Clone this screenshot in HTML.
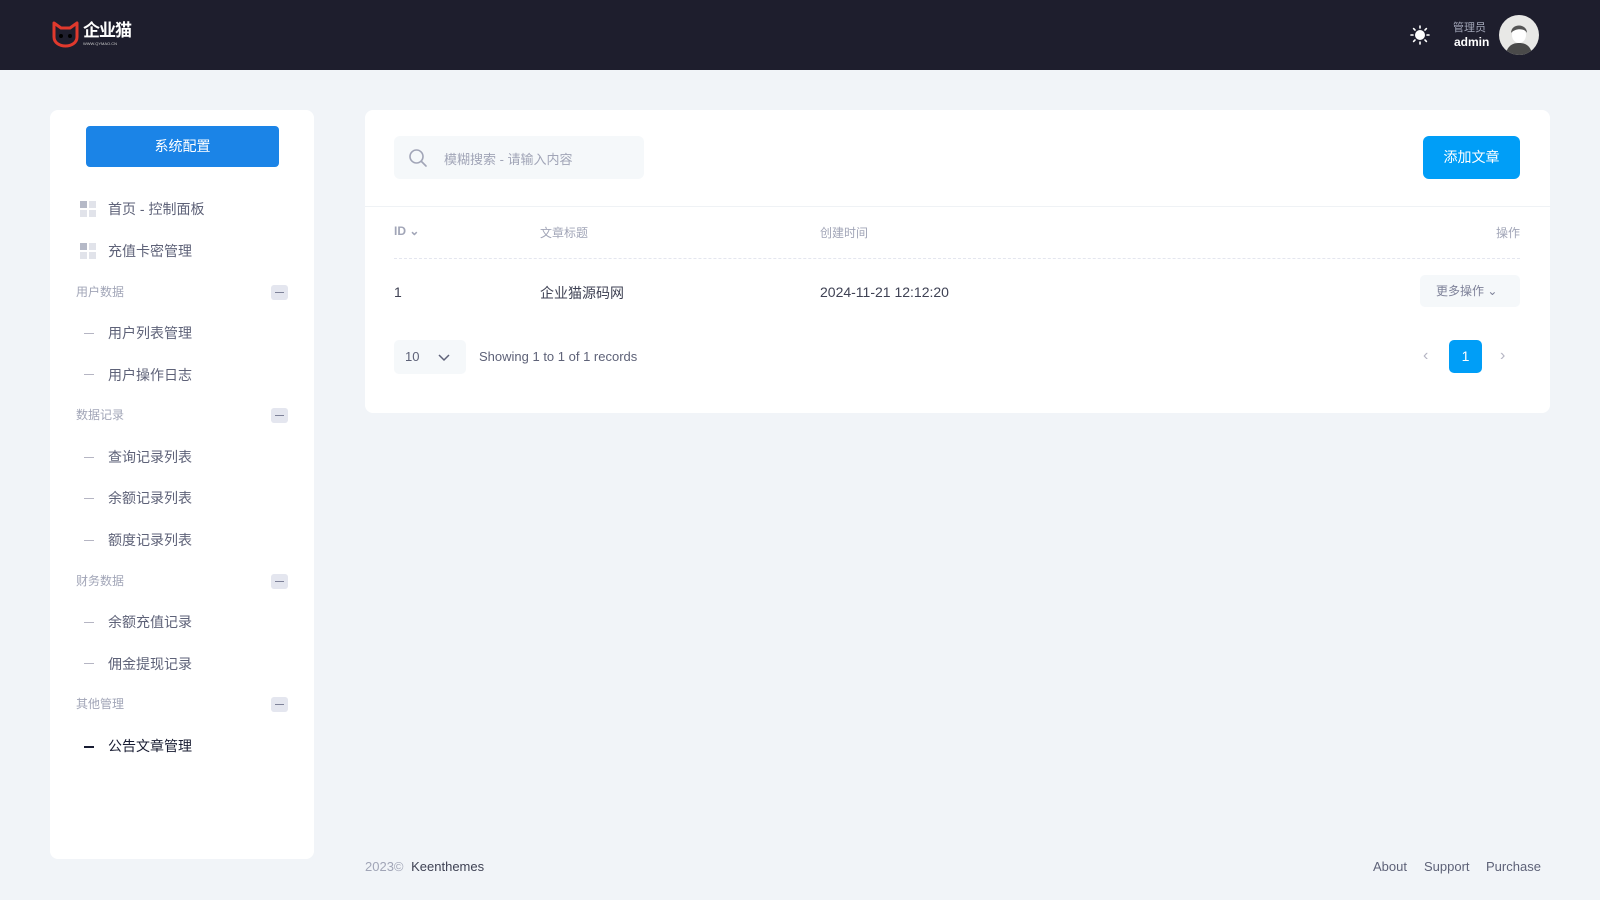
<!DOCTYPE html>
<html><head><meta charset="utf-8"><style>
*{margin:0;padding:0;box-sizing:border-box}
body{width:1600px;height:900px;background:#f1f4f8;font-family:"Liberation Sans","Noto Sans CJK SC",sans-serif;position:relative;overflow:hidden;color:#5e6278}
.a{position:absolute}
.hdr{left:0;top:0;width:1600px;height:70px;background:#1e1e2d}
.card{background:#fff;border-radius:8px}
.side .it{position:absolute;left:108px;font-size:14px;color:#5e6278;line-height:20px}
.side .sec{position:absolute;left:76px;font-size:12px;color:#a1a5b7;line-height:18px}
.side .mb{position:absolute;left:271px;width:17px;height:15px;background:#e4e6ef;border-radius:3px}
.side .mb:after{content:"";position:absolute;left:4px;top:7px;width:9px;height:1px;background:#7e8299}
.side .dash{position:absolute;left:84px;width:10px;height:1px;background:#b5b5c3}
.sq{position:absolute;left:80px;width:17px;height:17px}
.sq i{position:absolute;width:7px;height:7px;background:#e1e3ea}
</style></head><body>
<div class="a hdr"></div>
<svg class="a" style="left:51px;top:21px" width="29" height="27" viewBox="0 0 29 27"><path d="M3 2 L10 7 H19 L26 2 V16 C26 22 20 25 14.5 25 C9 25 3 22 3 16 Z" fill="#1e1e2d" stroke="#e0392d" stroke-width="3" stroke-linejoin="round"/><circle cx="10" cy="15" r="2" fill="#000"/><circle cx="19" cy="15" r="2" fill="#000"/></svg>
<div class="a" style="left:83px;top:21px;font-size:17px;font-weight:bold;color:#fff;letter-spacing:-1px;line-height:20px">企业猫</div>
<div class="a" style="left:83px;top:41px;font-size:4px;color:#ccc">WWW.QYMAO.CN</div>
<svg class="a" style="left:1410px;top:25px" width="20" height="20" viewBox="0 0 20 20"><circle cx="10" cy="10" r="5" fill="#fff"/><g stroke="#fff" stroke-width="1.6" stroke-linecap="round"><path d="M10 1v2M10 17v2M1 10h2M17 10h2M3.6 3.6l1.4 1.4M15 15l1.4 1.4M3.6 16.4L5 15M15 5l1.4-1.4"/></g></svg>
<div class="a" style="left:1453px;top:19px;font-size:11px;color:#a1a5b7">管理员</div>
<div class="a" style="left:1454px;top:35px;font-size:12px;font-weight:bold;color:#fff">admin</div>
<svg class="a" style="left:1499px;top:15px" width="40" height="40" viewBox="0 0 40 40"><clipPath id="c"><circle cx="20" cy="20" r="20"/></clipPath><g clip-path="url(#c)"><rect width="40" height="40" fill="#e8e8e6"/><path d="M6 42 C8 30 14 28 20 28 C26 28 32 30 34 42Z" fill="#4a4a4a"/><ellipse cx="20" cy="20" rx="7" ry="8" fill="#fff"/><path d="M12 18 C12 8 28 8 28 18 C26 13 16 13 12 18Z" fill="#555"/></g></svg>

<div class="a card side" style="left:50px;top:110px;width:264px;height:749px"></div>
<div class="side">
<div class="a" style="left:86px;top:126px;width:193px;height:41px;background:#1b84e7;border-radius:4px;color:#fff;font-size:14px;text-align:center;line-height:41px">系统配置</div>
<div class="sq" style="top:201px"><i style="left:0;top:0;background:#b5b9c7"></i><i style="left:9px;top:0"></i><i style="left:0;top:9px"></i><i style="left:9px;top:9px"></i></div>
<div class="it" style="top:199px">首页 - 控制面板</div>
<div class="sq" style="top:243px"><i style="left:0;top:0;background:#b5b9c7"></i><i style="left:9px;top:0"></i><i style="left:0;top:9px"></i><i style="left:9px;top:9px"></i></div>
<div class="it" style="top:241px">充值卡密管理</div>
<div class="sec" style="top:283px">用户数据</div><div class="mb" style="top:285px"></div>
<div class="dash" style="top:333px"></div><div class="it" style="top:323px">用户列表管理</div>
<div class="dash" style="top:374px"></div><div class="it" style="top:365px">用户操作日志</div>
<div class="sec" style="top:406px">数据记录</div><div class="mb" style="top:408px"></div>
<div class="dash" style="top:457px"></div><div class="it" style="top:447px">查询记录列表</div>
<div class="dash" style="top:498px"></div><div class="it" style="top:488px">余额记录列表</div>
<div class="dash" style="top:540px"></div><div class="it" style="top:530px">额度记录列表</div>
<div class="sec" style="top:572px">财务数据</div><div class="mb" style="top:574px"></div>
<div class="dash" style="top:622px"></div><div class="it" style="top:612px">余额充值记录</div>
<div class="dash" style="top:663px"></div><div class="it" style="top:654px">佣金提现记录</div>
<div class="sec" style="top:695px">其他管理</div><div class="mb" style="top:697px"></div>
<div class="dash" style="top:746px;background:#181c32;height:2px"></div><div class="it" style="top:736px;color:#181c32">公告文章管理</div>
</div>

<div class="a card" style="left:365px;top:110px;width:1185px;height:303px"></div>
<div class="a" style="left:394px;top:136px;width:250px;height:43px;background:#f5f8fa;border-radius:6px"></div>
<svg class="a" style="left:408px;top:148px" width="20" height="20" viewBox="0 0 20 20"><circle cx="8.5" cy="8.5" r="6.5" fill="none" stroke="#a1a5b7" stroke-width="1.6"/><path d="M13.5 13.5L18 18" stroke="#a1a5b7" stroke-width="1.6" stroke-linecap="round"/></svg>
<div class="a" style="left:444px;top:149px;font-size:13px;color:#a1a5b7">模糊搜索 - 请输入内容</div>
<div class="a" style="left:1423px;top:136px;width:97px;height:43px;background:#009ef7;border-radius:6px;color:#fff;font-size:14px;text-align:center;line-height:43px">添加文章</div>
<div class="a" style="left:365px;top:206px;width:1185px;height:1px;background:#eff2f5"></div>
<div class="a" style="left:394px;top:224px;font-size:12px;color:#a1a5b7;font-weight:bold">ID ⌄</div>
<div class="a" style="left:540px;top:224px;font-size:12px;color:#a1a5b7">文章标题</div>
<div class="a" style="left:820px;top:224px;font-size:12px;color:#a1a5b7">创建时间</div>
<div class="a" style="left:1490px;top:224px;font-size:12px;color:#a1a5b7;width:30px;text-align:right">操作</div>
<div class="a" style="left:394px;top:258px;width:1126px;border-top:1px dashed #e4e6ef"></div>
<div class="a" style="left:394px;top:284px;font-size:14px;color:#3f4254">1</div>
<div class="a" style="left:540px;top:283px;font-size:14px;color:#3f4254">企业猫源码网</div>
<div class="a" style="left:820px;top:284px;font-size:14px;color:#3f4254">2024-11-21 12:12:20</div>
<div class="a" style="left:1420px;top:275px;width:100px;height:32px;background:#f5f8fa;border-radius:5px;font-size:12px;color:#7e8299;line-height:32px;padding-left:16px">更多操作 ⌄</div>
<div class="a" style="left:394px;top:340px;width:72px;height:34px;background:#f5f8fa;border-radius:5px;font-size:13px;color:#5e6278;line-height:34px;padding-left:11px">10</div>
<svg class="a" style="left:438px;top:352px" width="12" height="10"><path d="M1 3l5 5 5-5" fill="none" stroke="#5e6278" stroke-width="1.5"/></svg>
<div class="a" style="left:479px;top:349px;font-size:13px;color:#5e6278">Showing 1 to 1 of 1 records</div>
<div class="a" style="left:1423px;top:347px;font-size:16px;color:#b5b5c3">‹</div>
<div class="a" style="left:1449px;top:340px;width:33px;height:33px;background:#009ef7;border-radius:5px;color:#fff;font-size:14px;text-align:center;line-height:33px">1</div>
<div class="a" style="left:1500px;top:347px;font-size:16px;color:#b5b5c3">›</div>

<div class="a" style="left:365px;top:859px;font-size:13px;color:#a1a5b7">2023© <span style="color:#3f4254;margin-left:4px">Keenthemes</span></div>
<div class="a" style="left:1373px;top:859px;font-size:13px;color:#5e6278">About</div>
<div class="a" style="left:1424px;top:859px;font-size:13px;color:#5e6278">Support</div>
<div class="a" style="left:1486px;top:859px;font-size:13px;color:#5e6278">Purchase</div>
</body></html>
